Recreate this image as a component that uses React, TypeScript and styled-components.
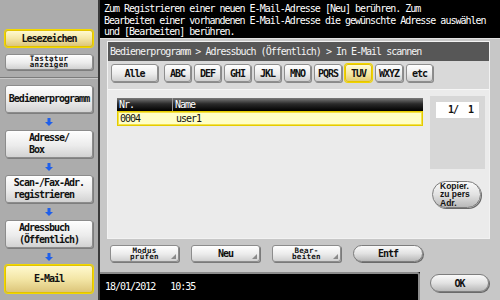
import styled, { createGlobalStyle, css } from "styled-components";

const GlobalStyle = createGlobalStyle`
  html, body { margin: 0; padding: 0; background: #000; }
  body { font-family: "DejaVu Sans Mono", "Liberation Mono", monospace; }
  * { box-sizing: border-box; }
`;

const mono = css`
  font-family: "DejaVu Sans Mono", "Liberation Mono", monospace;
  font-size: 10px;
  letter-spacing: -1px;
`;

const tiny = css`
  font-family: "DejaVu Sans Mono", "Liberation Mono", monospace;
  font-size: 7.5px;
  font-weight: bold;
  letter-spacing: 0.3px;
  line-height: 6px;
`;

const Screen = styled.div`
  display: flex;
  width: 500px;
  height: 300px;
  overflow: hidden;
  background: #000;
`;

// ---------- sidebar ----------
const Sidebar = styled.div`
  width: 100px;
  display: flex;
  flex-direction: column;
  background: #acacac;
  border-right: 2px solid #3a3a3a;
`;

const TopGroup = styled.div`
  height: 77px;
  padding: 30px 0 0 5px;
  display: flex;
  flex-direction: column;
  gap: 7px;
`;

const Separator = styled.div`
  height: 2px;
  border-top: 1px solid #7c7c7c;
  border-bottom: 1px solid #c9c9c9;
`;

const NavGroup = styled.div`
  padding: 6px 0 0 5px;
  display: flex;
  flex-direction: column;
`;

const SideButton = styled.div<{ $h: number; $active?: boolean }>`
  width: 88px;
  height: ${(p) => p.$h}px;
  display: flex;
  align-items: center;
  justify-content: center;
  border-radius: 3px;
  color: #111;
  font-weight: bold;
  ${mono};
  line-height: 12px;
  background: ${(p) =>
    p.$active
      ? "linear-gradient(#fff9cf, #f3e6a6 50%, #dcc57a)"
      : "linear-gradient(#fefefe, #ececec 55%, #d2d2d2)"};
  border: 1px solid ${(p) => (p.$active ? "#e2c300" : "#8c8c8c")};
  box-shadow: ${(p) =>
    p.$active ? "0 0 0 1px #f2d800" : "1px 1px 0 #7e7e7e, inset 0 1px 0 #fff"};
`;

const ButtonLabel = styled.span`
  display: inline-block;
  text-align: left;
  white-space: pre;
`;

const TinyLabel = styled.span`
  ${tiny};
  text-align: center;
  white-space: pre;
  color: #111;
`;

const ArrowSlot = styled.div`
  width: 88px;
  height: 17px;
  display: flex;
  align-items: center;
  justify-content: center;
`;

const DownArrow = () => (
  <svg width="8" height="8" viewBox="0 0 8 8">
    <path d="M2.5 0h3v4h2.5L4 8 0 4h2.5z" fill="#1f5fea" />
  </svg>
);

// ---------- main ----------
const Main = styled.div`
  flex: 1;
  display: flex;
  flex-direction: column;
  background: #000;
`;

const Message = styled.div`
  height: 38px;
  padding: 3px 0 0 4px;
  color: #fff;
  ${mono};
  line-height: 11.5px;
  white-space: pre;
`;

const Frame = styled.div`
  height: 234px;
  background: #c7c7c7;
  border-top: 1px solid #e2e2e2;
  padding: 2px 10px 0 7px;
  display: flex;
  flex-direction: column;
`;

const Panel = styled.div`
  height: 198px;
  background: #e7e7e7;
  border: 1px solid #f2f2f2;
  display: flex;
  flex-direction: column;
`;

const Crumb = styled.div`
  height: 19px;
  background: #575757;
  color: #f4f4f4;
  ${mono};
  line-height: 19px;
  padding-left: 2px;
  white-space: pre;
`;

const TabBand = styled.div`
  height: 28px;
  background: #d9d9d9;
  padding: 3px 0 0 3px;
  display: flex;
  gap: 3px;
`;

const Tab = styled.div<{ $w: number; $active?: boolean }>`
  width: ${(p) => p.$w}px;
  height: 18px;
  display: flex;
  align-items: center;
  justify-content: center;
  border-radius: 3px;
  font-weight: bold;
  ${mono};
  color: #111;
  background: ${(p) =>
    p.$active
      ? "linear-gradient(#fffbd6, #f4e59c 60%, #e2cd76)"
      : "linear-gradient(#ffffff, #ececec 55%, #cfcfcf)"};
  border: 1px solid ${(p) => (p.$active ? "#e5c400" : "#8e8e8e")};
  box-shadow: ${(p) =>
    p.$active ? "0 0 0 1px #f0d400" : "1px 1px 0 #8a8a8a"};
  &:first-child {
    margin-right: 3px;
  }
`;

const ListArea = styled.div`
  flex: 1;
  display: flex;
  padding: 6px 0 0 9px;
  background: #ebebeb;
  border-top: 1px solid #f6f6f6;
`;

const Table = styled.div`
  width: 306px;
  margin-top: 2px;
  display: flex;
  flex-direction: column;
`;

const HeadRow = styled.div`
  height: 13px;
  display: flex;
  background: linear-gradient(#7a7a7a, #2a2a2a 45%, #000);
  color: #fff;
  ${mono};
  line-height: 13px;
`;

const DataRow = styled.div`
  height: 15px;
  display: flex;
  background: #ffffc6;
  border: 1px solid #e4cc00;
  box-shadow: inset 0 0 0 1px #f4e24a;
  color: #111;
  ${mono};
  line-height: 13px;
`;

const Cell = styled.div<{ $w?: number; $sep?: boolean }>`
  width: ${(p) => (p.$w ? `${p.$w}px` : "auto")};
  padding-left: 2px;
  border-right: ${(p) => (p.$sep ? "1px solid #9a9a9a" : "none")};
`;

const SideCol = styled.div`
  margin-left: 7px;
  width: 55px;
  display: flex;
  flex-direction: column;
  align-items: flex-start;
`;

const Counter = styled.div`
  width: 55px;
  height: 73px;
  background: #d7d7d7;
  padding: 6px 6px 0 6px;
`;

const PageBox = styled.div`
  height: 16px;
  background: #fff;
  color: #111;
  ${mono};
  font-weight: bold;
  line-height: 16px;
  text-align: right;
  padding-right: 6px;
  white-space: pre;
`;

const Pill = styled.div<{ $w: number; $h: number }>`
  width: ${(p) => p.$w}px;
  height: ${(p) => p.$h}px;
  border-radius: ${(p) => p.$h / 2}px;
  background: linear-gradient(#fafafa, #e2e2e2 50%, #b9b9b9);
  border: 1px solid #7d7d7d;
  box-shadow: 1px 1px 0 #6a6a6a;
  display: flex;
  align-items: center;
  justify-content: center;
  color: #111;
  font-weight: bold;
  ${mono};
`;

const CopyButton = styled(Pill)`
  margin: 12px 0 0 2px;
  justify-content: flex-start;
  padding-left: 7px;
  font-family: "Liberation Sans", Arial, sans-serif;
  font-size: 8.5px;
  letter-spacing: 0;
  line-height: 8.5px;
  white-space: pre;
`;

const ButtonRow = styled.div`
  display: flex;
  gap: 12px;
  padding: 6px 0 0 3px;
`;

const MenuButton = styled.div`
  position: relative;
  width: 69px;
  height: 17px;
  border-radius: 3px;
  background: linear-gradient(#ffffff, #ebebeb 55%, #d0d0d0);
  border: 1px solid #8c8c8c;
  box-shadow: 1px 1px 0 #7a7a7a;
  display: flex;
  align-items: center;
  justify-content: center;
  color: #111;
  font-weight: bold;
  ${mono};
  &::after {
    content: "";
    position: absolute;
    right: 2px;
    bottom: 2px;
    border-left: 5px solid transparent;
    border-bottom: 5px solid #8a8a8a;
  }
`;

const Footer = styled.div`
  flex: 1;
  display: flex;
`;

const DateBox = styled.div`
  flex: 1;
  border-top: 2px solid #8c8c8c;
  border-right: 2px solid #8c8c8c;
  border-top-right-radius: 3px;
  color: #fff;
  ${mono};
  padding: 7px 0 0 5px;
  white-space: pre;
`;

const OkTab = styled.div`
  width: 80px;
  background: #c7c7c7;
  padding: 2px 0 0 10px;
`;

export default function App() {
  return (
    <>
      <GlobalStyle />
      <Screen>
        <Sidebar>
          <TopGroup>
            <SideButton $h={17} $active>
              Lesezeichen
            </SideButton>
            <SideButton $h={16}>
              <TinyLabel>{"Tastatur\nanzeigen"}</TinyLabel>
            </SideButton>
          </TopGroup>
          <Separator />
          <NavGroup>
            <SideButton $h={28}>
              <ButtonLabel>Bedienerprogramm</ButtonLabel>
            </SideButton>
            <ArrowSlot>
              <DownArrow />
            </ArrowSlot>
            <SideButton $h={28}>
              <ButtonLabel>{"Adresse/\nBox"}</ButtonLabel>
            </SideButton>
            <ArrowSlot>
              <DownArrow />
            </ArrowSlot>
            <SideButton $h={28}>
              <ButtonLabel>{"Scan-/Fax-Adr.\nregistrieren"}</ButtonLabel>
            </SideButton>
            <ArrowSlot>
              <DownArrow />
            </ArrowSlot>
            <SideButton $h={28}>
              <ButtonLabel>{"Adressbuch\n(Öffentlich)"}</ButtonLabel>
            </SideButton>
            <ArrowSlot>
              <DownArrow />
            </ArrowSlot>
            <SideButton $h={28} $active>
              E-Mail
            </SideButton>
          </NavGroup>
        </Sidebar>

        <Main>
          <Message>
            {"Zum Registrieren einer neuen E-Mail-Adresse [Neu] berühren. Zum\n" +
              "Bearbeiten einer vorhandenen E-Mail-Adresse die gewünschte Adresse auswählen\n" +
              "und [Bearbeiten] berühren."}
          </Message>
          <Frame>
            <Panel>
              <Crumb>
                Bedienerprogramm &gt; Adressbuch (Öffentlich) &gt; In E-Mail scannen
              </Crumb>
              <TabBand>
                <Tab $w={47}>Alle</Tab>
                <Tab $w={27}>ABC</Tab>
                <Tab $w={27}>DEF</Tab>
                <Tab $w={27}>GHI</Tab>
                <Tab $w={27}>JKL</Tab>
                <Tab $w={27}>MNO</Tab>
                <Tab $w={28}>PQRS</Tab>
                <Tab $w={27} $active>
                  TUV
                </Tab>
                <Tab $w={28}>WXYZ</Tab>
                <Tab $w={27}>etc</Tab>
              </TabBand>
              <ListArea>
                <Table>
                  <HeadRow>
                    <Cell $w={56} $sep>
                      Nr.
                    </Cell>
                    <Cell>Name</Cell>
                  </HeadRow>
                  <DataRow>
                    <Cell $w={56}>0004</Cell>
                    <Cell>user1</Cell>
                  </DataRow>
                </Table>
                <SideCol>
                  <Counter>
                    <PageBox>{"1/  1"}</PageBox>
                  </Counter>
                  <CopyButton $w={49} $h={27}>
                    {"Kopier.\nzu pers\nAdr."}
                  </CopyButton>
                </SideCol>
              </ListArea>
            </Panel>
            <ButtonRow>
              <MenuButton>
                <TinyLabel>{"Modus\nprüfen"}</TinyLabel>
              </MenuButton>
              <MenuButton>Neu</MenuButton>
              <MenuButton>
                <TinyLabel>{"Bear-\nbeiten"}</TinyLabel>
              </MenuButton>
              <Pill $w={70} $h={17}>
                Entf
              </Pill>
            </ButtonRow>
          </Frame>
          <Footer>
            <DateBox>{"18/01/2012   10:35"}</DateBox>
            <OkTab>
              <Pill $w={59} $h={18}>
                OK
              </Pill>
            </OkTab>
          </Footer>
        </Main>
      </Screen>
    </>
  );
}
